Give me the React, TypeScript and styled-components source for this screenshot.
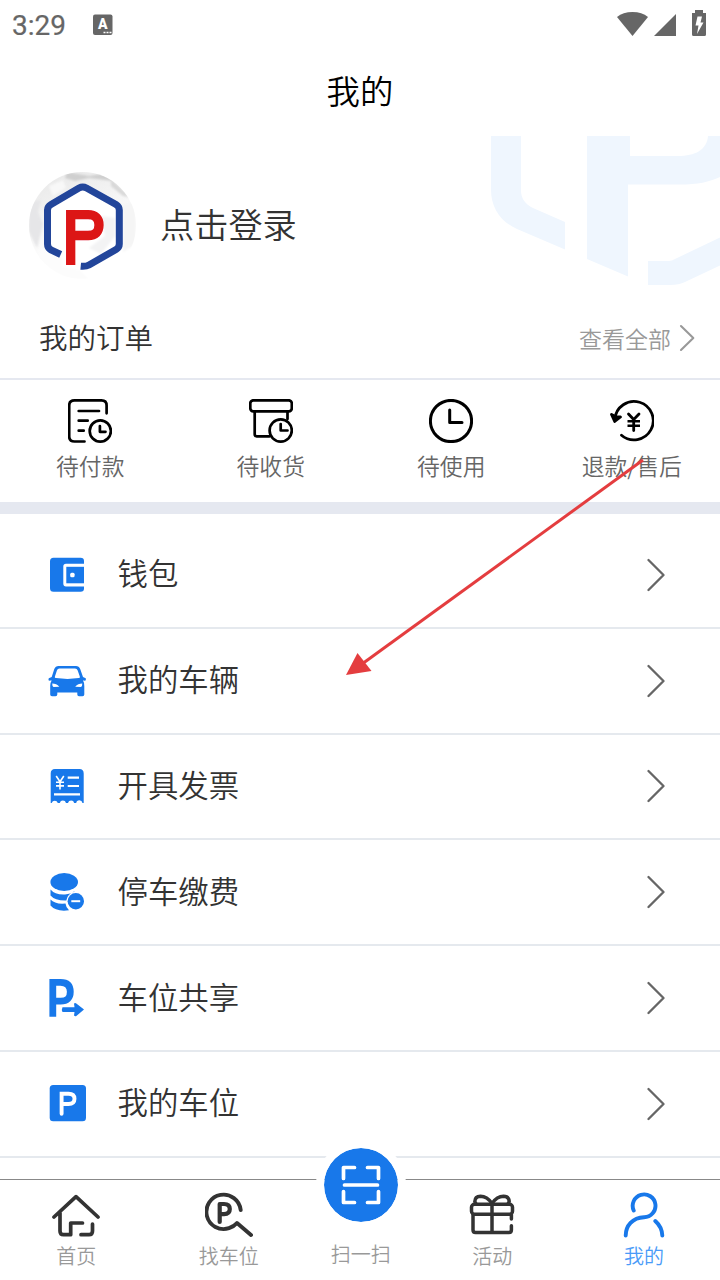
import React from "react";
import styled, { createGlobalStyle } from "styled-components";

const BLUE = "#1878ea";

const GlobalStyle = createGlobalStyle`
  * { box-sizing: border-box; }
  body {
    margin: 0;
    background: #fff;
    font-family: "Noto Sans CJK SC", "Noto Sans", sans-serif;
    font-weight: 350;
  }
  svg { display: block; flex: none; }
`;

const Screen = styled.main`
  position: relative;
  display: flex;
  flex-direction: column;
  width: 720px;
  height: 1280px;
  overflow: hidden;
  background: #fff;
`;

const StatusBar = styled.div`
  display: flex;
  align-items: center;
  height: 48px;
  padding: 2px 12px 0;
  color: #666;
  font: 400 28px/1 Roboto, sans-serif;
`;

const Clock = styled.span`
  margin-right: 27px;
  padding-top: 1px;
  -webkit-text-stroke: 0.2px #666;
`;

const StatusIcons = styled.div`
  display: flex;
  margin-left: auto;
  margin-right: -12px;
`;

const TitleBar = styled.header`
  display: flex;
  align-items: center;
  justify-content: center;
  height: 88px;
  padding-bottom: 5px;
  font-size: 33.4px;
  color: #000;
`;

const Profile = styled.section`
  display: flex;
  height: 164px;
`;

const Login = styled.div`
  display: flex;
  align-items: center;
  width: 490px;
  height: 178px;
  padding-left: 29px;
  gap: 24px;
  font-size: 34.2px;
  color: #333;
`;

const LoginLabel = styled.span`
  padding-bottom: 5px;
`;

const OrderHeader = styled.div`
  display: flex;
  align-items: center;
  height: 80px;
  padding: 0 25px 2px 39px;
  border-bottom: 2px solid #e5e8f0;
  font-size: 28.5px;
  color: #333;
`;

const OrderTitle = styled.span`
  padding-bottom: 3px;
`;

const ViewAll = styled.div`
  display: flex;
  align-items: center;
  gap: 8px;
  margin-left: auto;
  font-size: 23px;
  color: #999;
`;

const OrderGrid = styled.div`
  display: grid;
  grid-template-columns: repeat(4, 180.5px);
  height: 134px;
  border-bottom: 12px solid #e5e8f0;
`;

const OrderItem = styled.div`
  display: flex;
  flex-direction: column;
  align-items: center;
  padding-top: 19px;
  gap: 6px;
  font-size: 22.8px;
  line-height: 34px;
  color: #666;
`;

const MenuList = styled.div`
  flex: 1;
  padding-top: 9px;
`;

const MenuRow = styled.div`
  display: flex;
  align-items: center;
  height: 105.8px;
  padding: 0 55px 0 48px;
  border-bottom: 2px solid #e5e9ee;
`;

const MenuLabel = styled.span`
  flex: 1;
  margin-left: 29.5px;
  padding-bottom: 5px;
  font-size: 30.4px;
  line-height: 40px;
  color: #333;
`;

const TabBar = styled.nav`
  display: grid;
  grid-template-columns: 152.5px 152.5px 111.5px 151.5px 152px;
  height: 101px;
  border-top: 1px solid #888;
  background: #fff;
`;

const Tab = styled.div<{ $active?: boolean }>`
  display: flex;
  flex-direction: column;
  align-items: center;
  gap: 1px;
  padding-top: 12px;
  font-size: 20px;
  line-height: 30px;
  color: ${(p) => (p.$active ? "#4a9bf8" : "#999")};
`;

const ScanTab = styled(Tab)`
  position: relative;
  padding-top: 59px;
`;

const ScanButton = styled.div`
  position: absolute;
  left: 11px;
  top: -40px;
  display: flex;
  align-items: center;
  justify-content: center;
  width: 90px;
  height: 90px;
  border: 8px solid #fff;
  border-radius: 50%;
  background: ${BLUE};
  background-clip: padding-box;
`;

const Pointer = styled.svg`
  position: absolute;
  left: 340px;
  top: 454px;
`;

const Stroked = styled.svg<{ $w: number; $c?: string }>`
  fill: none;
  stroke: ${(p) => p.$c ?? "#000"};
  stroke-width: ${(p) => p.$w};
  stroke-linecap: round;
  stroke-linejoin: round;
`;

const Watermark = () => (
  <svg width="230" height="164" viewBox="0 0 230 164" fill="#eff6fe">
    <path d="M1 0V54C1 72 11 86 27 93L75 113.500V86L43 72C35 68 31 62 31 55V0Z" />
    <path d="M97 0H140V20H188C205 20 217 14 218 0H230V41C219 46 208 48.500 190 48.500H138V140.500L97 123Z" />
    <path d="M158 125H179Q182 125 185 123L230 101.500V129.500L195 146Q189 149 180 149H158Z" />
  </svg>
);

const Avatar = () => (
  <svg width="107" height="107" viewBox="0 0 107 107">
    <defs>
      <clipPath id="round"><circle cx="53.500" cy="53.500" r="53.500" /></clipPath>
      <linearGradient id="paper" x1="0" y1="0" x2="0.400" y2="1">
        <stop offset="0" stopColor="#e6e6e6" />
        <stop offset="0.800" stopColor="#fff" />
      </linearGradient>
      <filter id="soft"><feGaussianBlur stdDeviation="0.5" /></filter>
      <filter id="haze"><feGaussianBlur stdDeviation="1" /></filter>
    </defs>
    <g clipPath="url(#round)">
      <rect width="107" height="107" fill="url(#paper)" />
      <g filter="url(#haze)">
        <path d="M38 0L60 4 84 0V9L60 6 46 9 36 6Z" fill="#cfcfcf" />
        <path d="M0 30L12 28 9 40 14 52 8 76 0 60Z" fill="#e6e6e8" />
        <path d="M20 14L34 8 37 16 24 24Z" fill="#f8f8f8" />
        <path d="M82 7L101 25 94 24 82 14Z" fill="#d8d8d8" />
        <path d="M94 32L107 30V72L94 80Z" fill="#f5f5f5" />
        <path d="M10 78L33 86V95L51 98 60 107H10Z" fill="#fcfcfc" />
        <path d="M19 34L53.700 14 90 34V75L55 95 19 77Z" fill="#fff" />
        <path d="M72 44L86 46V64L72 82 60 76 76 64Z" fill="#f3f3f4" />
      </g>
      <g fill="none" filter="url(#soft)">
        <path d="M31.700 82.500L22 78Q18.500 76 18.500 72V38Q18.500 34.500 22 32.500L50 16Q53.700 14 57.500 16L87 32.500Q90.300 34.500 90.300 38V72Q90.300 75.500 87 77.500L60 93Q57 94.700 51.700 94.200" stroke="#21449a" strokeWidth="7" />
        <path d="M41.700 93V42.700H59Q70 42.700 70 53T59 63.500H42" stroke="#dc1218" strokeWidth="9.300" />
      </g>
    </g>
  </svg>
);

const Chevron = () => (
  <Stroked $w={2.3} $c="#666" width="18" height="34" viewBox="0 0 18 34">
    <path d="M1.500 2L16.500 17L1.500 32" />
  </Stroked>
);

const orders = [
  {
    label: "待付款",
    icon: (
      <>
        <path d="M16.500 42.500H6.500Q1.200 42.500 1.200 37.500V6.500Q1.200 1.400 6.500 1.400H33.500Q38.600 1.400 38.600 6.500V14.300M10.700 12H31M10.700 21.700H19.700M10.700 31.700H15.700" />
        <circle cx="32.300" cy="32" r="10.600" />
        <path d="M31.900 27V32.800H37.500" />
      </>
    ),
    w: 2.7,
  },
  {
    label: "待收货",
    icon: (
      <>
        <rect x="1.300" y="1.300" width="41.500" height="11" rx="3" />
        <path d="M5.700 12.500V35.300Q5.700 37.300 7.700 37.300H20.500M38.500 12.500V20" />
        <circle cx="31.700" cy="31.500" r="11.100" />
        <path d="M31.700 25V31.500H38.500" />
      </>
    ),
    w: 2.7,
  },
  {
    label: "待使用",
    icon: (
      <>
        <circle cx="22" cy="22" r="20.600" />
        <path d="M20.700 11V23.500H33" />
      </>
    ),
    w: 3,
  },
  {
    label: "退款/售后",
    icon: (
      <>
        <path d="M4.900 20A19.200 19.200 0 1 1 11.500 36.200" />
        <path d="M1.500 15.500L4.700 22.500L10.500 18L6.500 18Z" fill="#000" />
        <path d="M18.500 15L23.700 20.500L29 15M23.700 20.500V31.500" />
        <path d="M17.500 22.300H30M17.500 26.800H30" strokeLinecap="butt" strokeWidth="2.400" />
      </>
    ),
    w: 2.8,
  },
];

const line = { fill: "none", stroke: "#fff" };

const menu = [
  {
    label: "钱包",
    icon: (
      <>
        <path d="M5.500 2.700H32.500Q36 2.700 36 6V8.700H18Q15.300 8.700 15.300 11.500V28.500Q15.300 31.500 18 31.500H36V33.500Q36 36.700 32.500 36.700H5.500Q2 36.700 2 33.200V6.200Q2 2.700 5.500 2.700Z" fill={BLUE} />
        <path d="M18.300 11.800H36V28.300H18.300Z" fill={BLUE} />
        <rect x="22.200" y="17.700" width="4.400" height="4.600" rx="1.500" fill="#fff" />
      </>
    ),
  },
  {
    label: "我的车辆",
    icon: (
      <>
        <path d="M10.500 5H28Q31 5 32.200 8L35 16L37.700 17.300Q38.500 20 36 19.600L35 19.500Q36.300 21.500 36.300 25V33.500Q36.300 35.200 34.500 35.200H31Q29.300 35.200 29.300 33.500V31.500H9.300V33.500Q9.300 35.200 7.500 35.200H4Q2.200 35.200 2.200 33.500V25Q2.200 21.500 3.700 19.500L2 19.600Q-.2 20 .8 17.300L3.700 16L6.300 8Q7.500 5 10.500 5Z" fill={BLUE} />
        <path d="M11.500 7.500H27Q29 7.500 29.700 9.500L31.800 15.500Q32.300 17 30.800 17L19.500 18L8 17Q6.300 17 6.900 15.500L8.900 9.500Q9.500 7.500 11.500 7.500Z" fill="#fff" />
        <path d="M4.200 22.500Q8.500 22.500 11.300 25.700L5.500 26Q4.200 25.500 4.200 22.500ZM34.300 22.500Q30 22.500 27.200 25.700L33 26Q34.300 25.500 34.300 22.500Z" fill="#fff" />
      </>
    ),
  },
  {
    label: "开具发票",
    icon: (
      <>
        <path d="M7 3H31.500Q35.700 3 35.700 7.500V37H34.500A3.200 3.200 0 0 0 28.200 37H26.200A3.200 3.200 0 0 0 20 37H18A3.200 3.200 0 0 0 11.800 37H9.800A3.200 3.200 0 0 0 3.700 37H2.700V7.500Q2.700 3 7 3Z" fill={BLUE} />
        <path d="M8.200 10L12 15.700L15.800 10M12 15.700V23.500M8 16.300H16M8 19.900H16" {...line} strokeWidth="1.600" />
        <path d="M19.700 11.700H31M19.700 20H31M6 28.300H32" {...line} strokeWidth="2.200" />
      </>
    ),
  },
  {
    label: "停车缴费",
    icon: (
      <g fill={BLUE}>
        <ellipse cx="16.200" cy="10" rx="13.800" ry="9" />
        <path d="M2.500 17.500Q7 23 17 22.500Q23 21.800 26 19.500L27 19.500Q19.500 21.500 18.300 28.500Q7 28.800 2.500 23.500Z" />
        <path d="M2.500 27.500Q7 32.500 17.500 31.500Q18 35.800 21 38.300Q8 40 2.500 33.500Z" />
        <circle cx="27.800" cy="29.200" r="8.200" />
        <path d="M23.300 29.200H32.200" {...line} strokeWidth="2" />
      </g>
    ),
  },
  {
    label: "车位共享",
    icon: (
      <>
        <path d="M4.800 38.700V4.300H12.500Q22.300 4.300 22.300 13.800T12.500 23.200H5" fill="none" stroke={BLUE} strokeWidth="6.800" />
        <path d="M14.500 29.300H26.500L26 25.500Q27.300 24.500 28.300 25.500L36 31.500L28.300 38Q27.300 38.700 26 37.500L26.500 33.900H14.500Q13.300 31.500 14.500 29.300Z" fill={BLUE} />
      </>
    ),
  },
  {
    label: "我的车位",
    icon: (
      <>
        <rect x="1.700" y="1" width="36.300" height="36.200" rx="3.500" fill={BLUE} />
        <path d="M13.600 29.800V9.700H20.500Q26.500 9.700 26.500 14.800T20.500 20H14" {...line} strokeWidth="3.900" strokeLinecap="round" />
      </>
    ),
  },
];

const HomeIcon = () => (
  <Stroked $w={3.7} $c="#333" width="48" height="48" viewBox="0 0 48 48">
    <path d="M2 25L24 4.700L46 25M8 21V39Q8 42.700 11.500 42.700H18.700V31H30.500M29 42.700H37Q40.500 42.700 40.500 39V32" />
  </Stroked>
);

const FindIcon = () => (
  <Stroked $w={3.9} $c="#333" width="48" height="48" viewBox="0 0 48 48">
    <path d="M35.700 18A17.200 17.200 0 1 0 24 36.200Q29 34.500 32 31L46 43" />
    <path d="M14.700 30V12H19Q24.800 12 24.800 17T19 22.200H15" strokeWidth="4.200" />
  </Stroked>
);

const GiftIcon = () => (
  <Stroked $w={3.5} $c="#333" width="48" height="48" viewBox="0 0 48 48">
    <rect x="3.500" y="12.300" width="41" height="9.900" rx="3" />
    <path d="M5 22.500V38Q5 40.500 7.500 40.500H41Q43.400 40.500 43.400 38V33.700M43.400 22.500V27M24 12V40M24 11.500Q19 4.300 12.500 4.300Q7 4.500 6.800 9.500L8 12M24 11.500Q29 4.300 35.500 4.300Q41 4.500 41.200 9.500L40 12" />
  </Stroked>
);

const UserIcon = () => (
  <Stroked $w={3.9} $c={BLUE} width="48" height="48" viewBox="0 0 48 48">
    <path d="M13.700 18.500A11.400 11.400 0 1 1 24 25.200C12.500 25.500 5.700 34 5.700 43.500M35.300 29Q42 35 42.300 43.500" />
  </Stroked>
);

export default function App() {
  return (
    <Screen>
      <GlobalStyle />
      <StatusBar>
        <Clock>3:29</Clock>
        <svg width="20" height="22" viewBox="0 0 20 22">
          <rect y="0.500" width="19.500" height="20.500" rx="2" fill="#666" />
          <text x="9.700" y="15" textAnchor="middle" fontFamily="Roboto" fontWeight="900" fontSize="14" fill="#fff">A</text>
          <path d="M10.500 18.500H12.500M13.500 18.500H15.500M16.500 18.500H18.500" stroke="#fff" strokeWidth="1.600" />
        </svg>
        <StatusIcons>
          <svg width="104" height="30" viewBox="0 0 104 30" fill="#666">
            <path d="M1 7Q7 2 16.500 2T32 7L16.500 26Z" />
            <path d="M60 4V26H38Z" />
            <path d="M79 0H87V3H90V24.500Q90 26 88.500 26H77.500Q76 26 76 24.500V3H79Z" />
            <path d="M81.500 6.500H86L84.500 12.500H87.500L81 24L82.500 15.500H79.500Z" fill="#fff" />
          </svg>
        </StatusIcons>
      </StatusBar>
      <TitleBar>我的</TitleBar>
      <Profile>
        <Login>
          <Avatar />
          <LoginLabel>点击登录</LoginLabel>
        </Login>
        <Watermark />
      </Profile>
      <OrderHeader>
        <OrderTitle>我的订单</OrderTitle>
        <ViewAll>
          <span>查看全部</span>
          <Stroked $w={2.1} $c="#999" width="16" height="28" viewBox="0 0 16 28">
            <path d="M2 2L14.300 14L2 26" />
          </Stroked>
        </ViewAll>
      </OrderHeader>
      <OrderGrid>
        {orders.map((o) => (
          <OrderItem key={o.label}>
            <Stroked $w={o.w} width="44" height="44" viewBox="0 0 44 44">{o.icon}</Stroked>
            <span>{o.label}</span>
          </OrderItem>
        ))}
      </OrderGrid>
      <MenuList>
        {menu.map((m) => (
          <MenuRow key={m.label}>
            <svg width="40" height="40" viewBox="0 0 40 40">{m.icon}</svg>
            <MenuLabel>{m.label}</MenuLabel>
            <Chevron />
          </MenuRow>
        ))}
      </MenuList>
      <TabBar>
        <Tab><HomeIcon />首页</Tab>
        <Tab><FindIcon />找车位</Tab>
        <ScanTab>
          <ScanButton>
            <Stroked $w={3.7} $c="#fff" width="42" height="42" viewBox="0 0 42 42">
              <path d="M14.500 3.500H3.500V14.500M27.500 3.500H38.500V14.500M3.500 27.500V38.500H14.500M38.500 27.500V38.500H27.500M4.500 21H37.500" />
            </Stroked>
          </ScanButton>
          扫一扫
        </ScanTab>
        <Tab><GiftIcon />活动</Tab>
        <Tab $active><UserIcon />我的</Tab>
      </TabBar>
      <Pointer width="310" height="230" viewBox="0 0 310 230">
        <path d="M303 6L22 210" stroke="#e43d3f" strokeWidth="3" />
        <path d="M6 221L17.500 199L31.500 217Z" fill="#e43d3f" />
      </Pointer>
    </Screen>
  );
}
